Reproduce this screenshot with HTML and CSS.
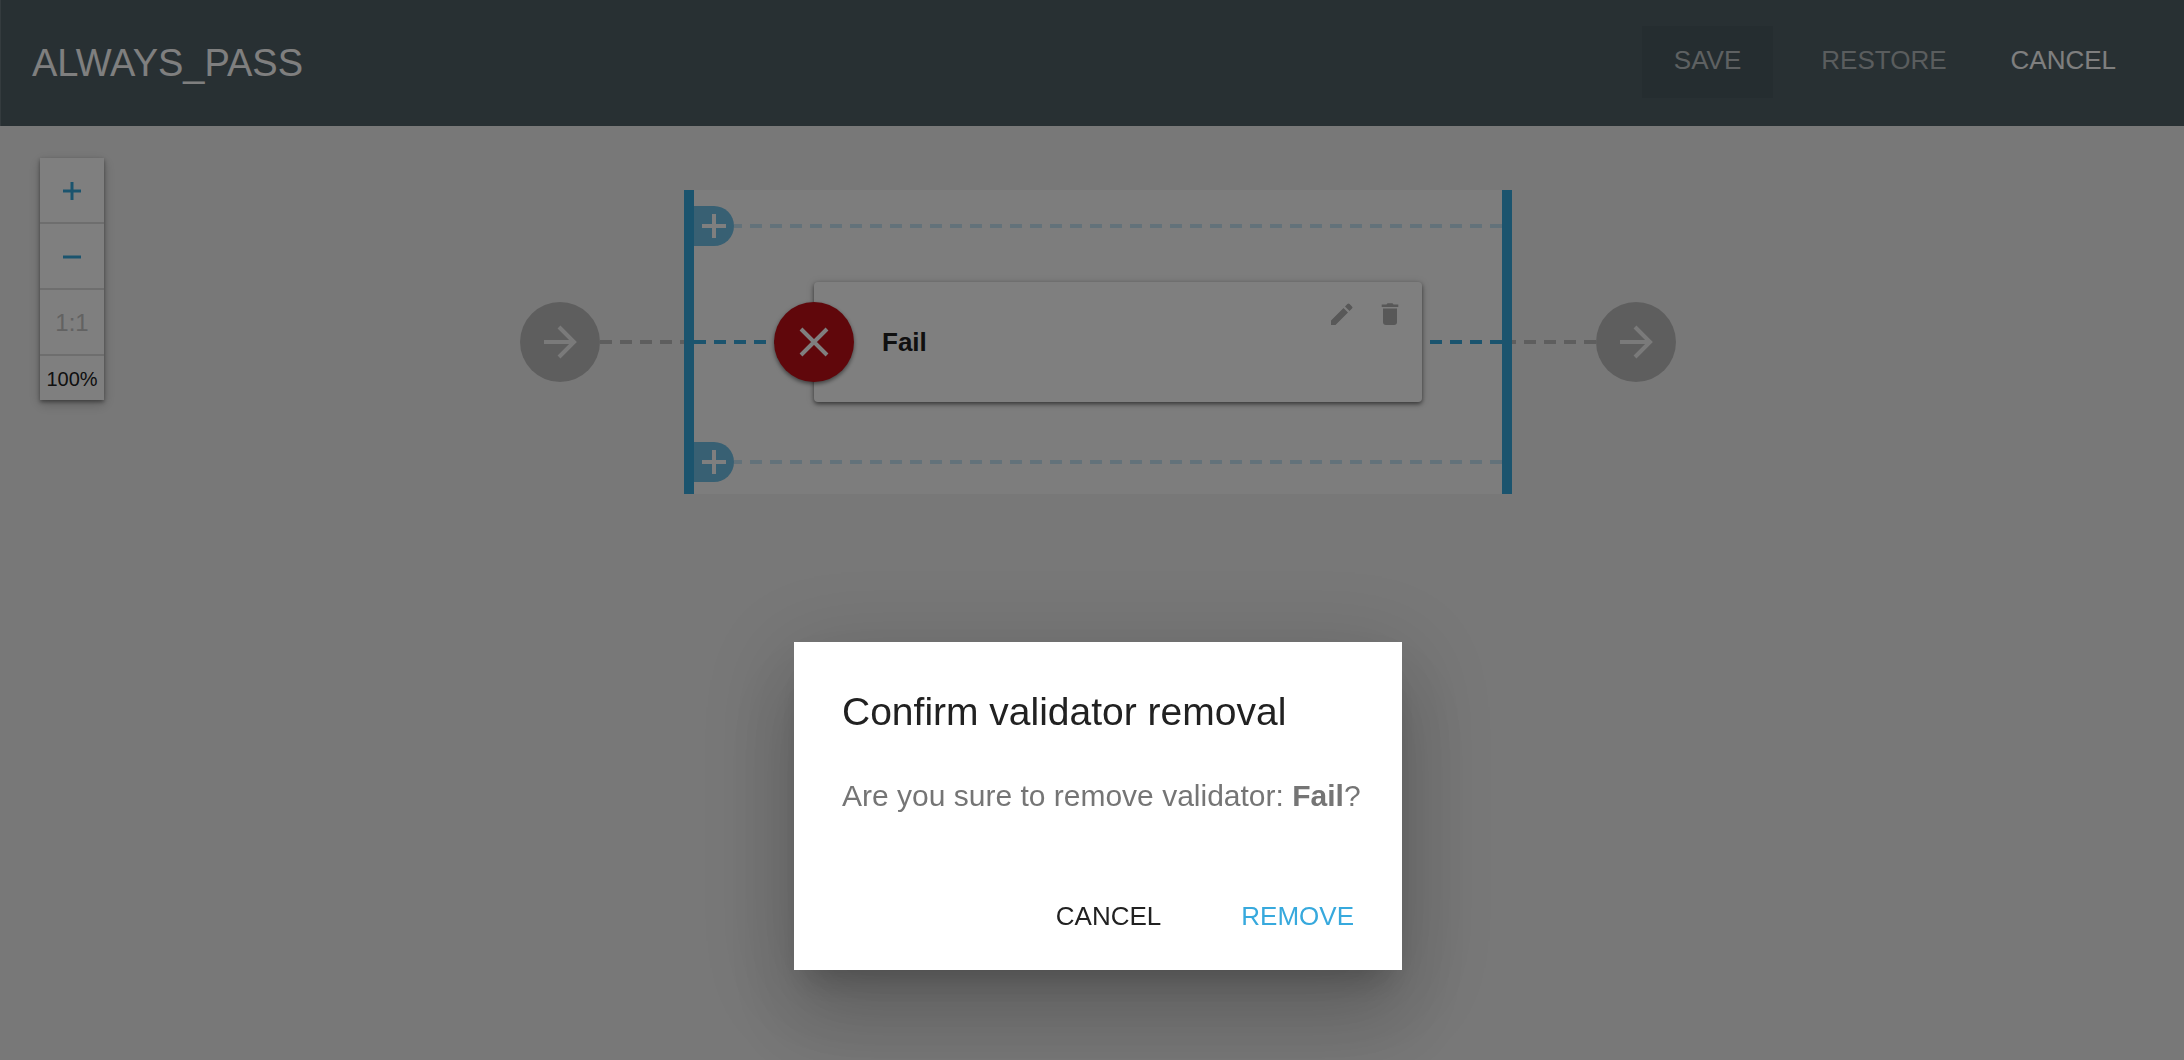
FILE: index.html
```html
<!DOCTYPE html>
<html lang="en">
<head>
<meta charset="utf-8">
<title>ALWAYS_PASS</title>
<link rel="stylesheet" href="styles.css">
</head>
<body>
<div class="page">
  <header class="toolbar">
    <h1 class="toolbar-title">ALWAYS_PASS</h1>
    <button class="btn btn-raised" type="button" disabled>SAVE</button>
    <button class="btn btn-muted" type="button" disabled>RESTORE</button>
    <button class="btn" type="button">CANCEL</button>
  </header>
  <main class="canvas">
    <div class="zoom">
      <button class="zoom-btn" type="button" aria-label="Zoom in"><svg width="18" height="18" viewBox="0 0 18 18"><path d="M0 9h18M9 0v18" stroke="currentColor" stroke-width="3"/></svg></button>
      <button class="zoom-btn" type="button" aria-label="Zoom out"><svg width="18" height="18" viewBox="0 0 18 18"><path d="M0 9h18" stroke="currentColor" stroke-width="3"/></svg></button>
      <button class="zoom-btn" type="button" disabled>1:1</button>
      <span class="zoom-level">100%</span>
    </div>
    <div class="flow">
      <div class="node"><svg width="80" height="80" viewBox="0 0 80 80"><path d="M24 40h30M39 25l15 15-15 15" fill="none" stroke="currentColor" stroke-width="4"/></svg></div>
      <div class="dash dash-gray"></div>
      <section class="group">
        <div class="lane">
          <button class="add" type="button" aria-label="Add validator above"><svg width="40" height="40" viewBox="0 0 40 40"><path d="M8 20h24M20 8v24" stroke="currentColor" stroke-width="4"/></svg></button>
          <div class="dash dash-pale dash-end"></div>
        </div>
        <div class="lane lane-main">
          <div class="dash dash-blue dash-in"></div>
          <article class="card">
            <span class="badge"><svg width="80" height="80" viewBox="0 0 80 80"><path d="M27 27l26 26M53 27L27 53" fill="none" stroke="currentColor" stroke-width="4"/></svg></span>
            <h2 class="card-title">Fail</h2>
            <div class="card-tools">
              <button class="icon-btn" type="button" aria-label="Edit"><svg width="28" height="28" viewBox="0 0 28 28"><path d="M3 20.500V25h4.500L20 12.500 15.500 8zM24 8.600a1.500 1.500 0 0 0 0-2.200L21.600 4a1.500 1.500 0 0 0-2.200 0L17 6.500l4.500 4.500z" fill="currentColor"/></svg></button>
              <button class="icon-btn" type="button" aria-label="Remove"><svg width="28" height="28" viewBox="0 0 28 28"><path d="M7 8.500h14V22a3 3 0 0 1-3 3H10a3 3 0 0 1-3-3zM6 4.500h4.500L11.500 3.300h5l1 1.200H22.300v2.500H5.700V4.500z" fill="currentColor"/></svg></button>
            </div>
          </article>
          <div class="dash dash-blue dash-end dash-out"></div>
        </div>
        <div class="lane">
          <button class="add" type="button" aria-label="Add validator below"><svg width="40" height="40" viewBox="0 0 40 40"><path d="M8 20h24M20 8v24" stroke="currentColor" stroke-width="4"/></svg></button>
          <div class="dash dash-pale dash-end"></div>
        </div>
      </section>
      <div class="dash dash-gray dash-end"></div>
      <div class="node"><svg width="80" height="80" viewBox="0 0 80 80"><path d="M24 40h30M39 25l15 15-15 15" fill="none" stroke="currentColor" stroke-width="4"/></svg></div>
    </div>
  </main>
</div>
<div class="backdrop">
  <div class="dialog" role="dialog" aria-modal="true" aria-labelledby="dialog-title">
    <h2 class="dialog-title" id="dialog-title">Confirm validator removal</h2>
    <p class="dialog-text">Are you sure to remove validator: <b>Fail</b>?</p>
    <div class="dialog-actions">
      <button class="btn" type="button">CANCEL</button>
      <button class="btn btn-primary" type="button">REMOVE</button>
    </div>
  </div>
</div>
</body>
</html>
```
FILE: styles.css
```css
* { box-sizing: border-box; }

body {
  margin: 0;
  font-family: "Liberation Sans", Arial, sans-serif;
  color: #212121;
  background: #f1f1f1;
}

h1, h2, p { margin: 0; font-weight: 400; }
svg { display: block; }

button {
  margin: 0;
  padding: 0;
  border: 0;
  background: none;
  font: inherit;
  color: inherit;
}

.page {
  display: flex;
  flex-direction: column;
  min-height: 100vh;
}

.toolbar {
  display: flex;
  align-items: center;
  height: 126px;
  padding: 0 36px 0 31px;
  border-left: 1px solid #68777d;
  background: #506066;
  color: #fff;
}

.toolbar-title { flex: 1; font-size: 38px; line-height: 44px; }

.btn {
  height: 72px;
  padding: 0 32px 4px;
  font-size: 26px;
  line-height: 68px;
}

.btn-raised { margin-right: 16px; background: #4a5a60; color: #bdc2c4; }
.btn-muted { color: #b4babc; }
.btn-primary { color: #37a9dd; }
.toolbar .btn { margin-bottom: 2px; }

.canvas {
  display: grid;
  grid-template-columns: 1fr auto 1fr;
  align-items: start;
  padding: 32px 0 32px 12px;
}

.zoom {
  display: flex;
  flex-direction: column;
  width: 64px;
  margin-left: 28px;
  background: #fff;
  box-shadow: 0 2px 4px rgba(0, 0, 0, 0.4), 0 4px 12px rgba(0, 0, 0, 0.2);
}

.zoom-btn {
  display: flex;
  align-items: center;
  justify-content: center;
  height: 66px;
  padding-top: 2px;
  border-bottom: 2px solid #dcdcdc;
  font-size: 24px;
  color: #37a9dd;
}

.zoom-btn:disabled { color: #c4c4c4; }
.zoom-level { padding-top: 2px; font-size: 20px; line-height: 42px; text-align: center; }

.flow { display: flex; align-items: center; padding-top: 32px; }

.node {
  width: 80px;
  height: 80px;
  border-radius: 50%;
  background: #bdbdbd;
  color: #f5f5f5;
}

.dash {
  width: 84px;
  height: 4px;
  background: repeating-linear-gradient(to right, currentColor 0 12px, transparent 12px 20px);
}

.dash-end {
  background: repeating-linear-gradient(to left, currentColor 0 12px, transparent 12px 20px);
}

.dash-gray { color: #bdbdbd; }
.dash-blue { color: #37a9dd; }
.dash-pale { flex: 1; color: #c6e5f4; }
.dash-in { width: 120px; }
.dash-out { width: 80px; }

.group {
  display: flex;
  flex-direction: column;
  justify-content: space-between;
  height: 304px;
  padding: 16px 0 12px;
  border: solid #37a9dd;
  border-width: 0 10px;
  background: #fafafa;
}

.lane { display: flex; align-items: center; }
.lane-main { margin-bottom: 4px; }

.add {
  width: 40px;
  height: 40px;
  border-radius: 0 20px 20px 0;
  background: #70c0e6;
  color: #fff;
}

.card {
  position: relative;
  display: flex;
  align-items: center;
  width: 608px;
  height: 120px;
  padding: 0 18px 0 68px;
  border-radius: 4px;
  background: #fff;
  box-shadow: 0 2px 4px rgba(0, 0, 0, 0.5), 0 1px 8px rgba(0, 0, 0, 0.15);
}

.badge {
  position: absolute;
  left: -40px;
  width: 80px;
  height: 80px;
  border-radius: 50%;
  background: #c00e16;
  color: #fff;
  box-shadow: 0 2px 4px rgba(0, 0, 0, 0.5);
}

.card-title { flex: 1; font-size: 26px; font-weight: 700; }
.card-tools { display: flex; align-self: flex-start; gap: 20px; padding-top: 18px; color: #b0b0b0; }

.backdrop {
  position: fixed;
  inset: 0;
  display: flex;
  align-items: flex-end;
  justify-content: center;
  padding: 0 0 90px 12px;
  background: rgba(0, 0, 0, 0.5);
}

.dialog {
  display: flex;
  flex-direction: column;
  width: 608px;
  padding: 48px 16px 16px;
  background: #fff;
  box-shadow: 0 22px 30px -14px rgba(0, 0, 0, 0.2), 0 48px 76px 6px rgba(0, 0, 0, 0.14), 0 18px 92px 16px rgba(0, 0, 0, 0.12);
}

.dialog-title { padding: 0 32px; font-size: 39px; line-height: 44px; }
.dialog-text { padding: 40px 24px 64px 32px; font-size: 30px; line-height: 44px; white-space: nowrap; color: #757575; }
.dialog-actions { display: flex; justify-content: flex-end; gap: 16px; }
```
